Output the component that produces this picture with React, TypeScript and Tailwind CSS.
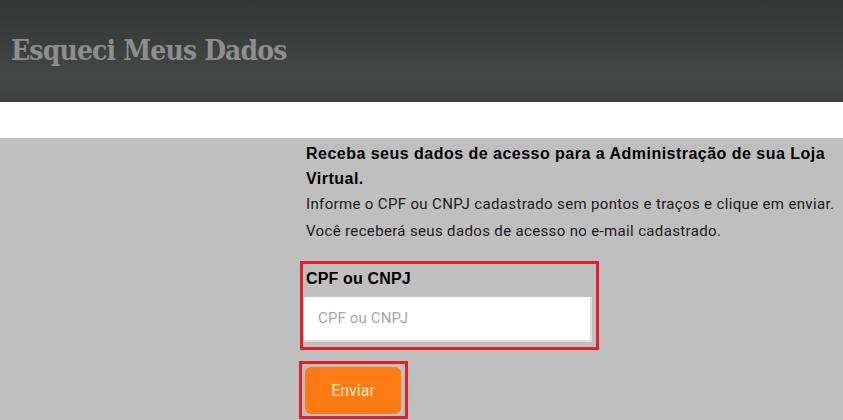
import React from "react";

export default function App() {
  return (
    <div className="w-[843px] h-[420px] overflow-hidden bg-[#bfbfbf]">
      <header className="h-[102px] bg-[linear-gradient(180deg,#353636_0%,#3d3e3e_45%,#464847_75%,#3f4141_100%)] pl-[11px] pt-[34px]">
        <h1
          className="text-[28px] leading-[34px] font-bold text-[#8e8e8e] tracking-[-0.85px]"
          style={{ fontFamily: '"DejaVu Serif Condensed", "DejaVu Serif", serif' }}
        >
          Esqueci Meus Dados
        </h1>
      </header>
      <div className="h-[36px] bg-white"></div>
      <div className="flex">
        <div className="w-[300px] shrink-0"></div>
        <div className="w-[540px]">
          <div className="pl-[6px] pt-[3px]">
            <p
              className="text-[16px] leading-[25px] font-bold text-black tracking-[0.48px]"
              style={{ fontFamily: '"Liberation Sans", Arial, sans-serif' }}
            >
              Receba seus dados de acesso para a Administração de sua Loja Virtual.
            </p>
            <p
              className="text-[15px] leading-[27px] text-[#1a1a1a] tracking-[0.35px]"
              style={{ fontFamily: 'Roboto, sans-serif' }}
            >
              Informe o CPF ou CNPJ cadastrado sem pontos e traços e clique em enviar.
            </p>
            <p
              className="text-[15px] leading-[27px] text-[#1a1a1a] tracking-[0.35px]"
              style={{ fontFamily: 'Roboto, sans-serif' }}
            >
              Você receberá seus dados de acesso no e-mail cadastrado.
            </p>
          </div>
          <div className="mt-[16px] w-[299px] h-[89px] border-[3px] border-[#e0202a] pl-[1px] pt-[4px]">
            <label
              className="block pl-[2px] text-[16px] leading-[22px] font-bold text-black tracking-[0.15px]"
              style={{ fontFamily: '"Liberation Sans", Arial, sans-serif' }}
            >
              CPF ou CNPJ
            </label>
            <div className="mt-[7px] w-[288px] h-[45px] bg-white border-b-2 border-r-2 border-[#dcdcdc] flex items-center pl-[14px]">
              <span
                className="text-[15px] text-[#a6a6a6] tracking-[0.15px]"
                style={{ fontFamily: 'Roboto, sans-serif' }}
              >
                CPF ou CNPJ
              </span>
            </div>
          </div>
          <div className="mt-[11px] -ml-[1px] w-[109px] h-[58px] border-[3px] border-[#e0202a] pl-[3px] pt-[3px]">
            <div
              className="w-[96px] h-[47px] rounded-[6px] bg-[#fd7a14] flex items-center justify-center text-[16px] text-[#ffe9c6]"
              style={{ fontFamily: 'Roboto, sans-serif' }}
            >
              Enviar
            </div>
          </div>
        </div>
      </div>
    </div>
  );
}
